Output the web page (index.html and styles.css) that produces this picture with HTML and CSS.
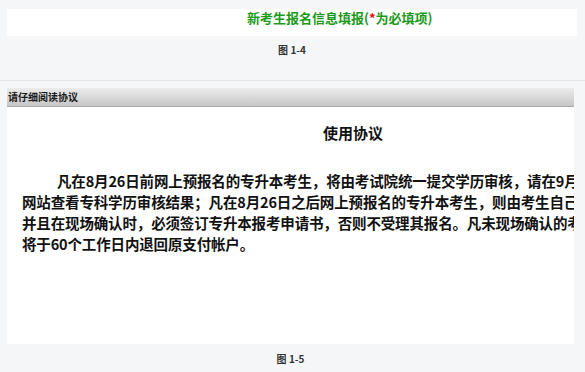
FILE: index.html
```html
<html>

<head>
    <meta http-equiv="Content-Type" content="text/html; charset=UTF-8">
    <title>报名说明</title>
    <link rel="stylesheet" href="styles.css">
</head>

<body>

    <!-- 图 1-4 -->
    <div class="fig">
        <div class="form-head">
            新考生报名信息填报(<span class="star">*</span>为必填项)
        </div>
        <p class="caption">图 1-4</p>
    </div>

    <!-- 图 1-5 -->
    <div class="fig fig2">
        <div class="panel">
            <div class="panel-title">请仔细阅读协议</div>
            <div class="panel-body">
                <div class="agree">
                    <h3 class="agree-title">使用协议</h3>
                    <p class="agree-text">凡在8月26日前网上预报名的专升本考生，将由考试院统一提交学历审核，请在9月1日后登录学信网查询，<br>网站查看专科学历审核结果；凡在8月26日之后网上预报名的专升本考生，则由考生自己登录学信网查询，<br>并且在现场确认时，必须签订专升本报考申请书，否则不受理其报名。凡未现场确认的考生，报名费<br>将于60个工作日内退回原支付帐户。</p>
                </div>
            </div>
        </div>
        <p class="caption">图 1-5</p>
    </div>

</body>

</html>
```

FILE: styles.css
```css
* {
    margin: 0;
    padding: 0;
}

body {
    background: #f5f6f8;
    font-family: "Noto Sans CJK SC", "Liberation Sans", sans-serif;
    color: #222;
}

/* 图 1-4 */
.fig {
    padding: 9px 8px 0 7px;
    height: 71px;
    border-bottom: 1px solid #e4e5e8;
}

.form-head {
    height: 27px;
    background: #fff;
    padding-left: 240px;
    box-sizing: border-box;
    font-size: 13px;
    font-weight: bold;
    line-height: 18px;
    color: #1b9a1b;
}

.star {
    color: #e01010;
}

.caption {
    margin-top: 7px;
    text-align: center;
    font-size: 10px;
    font-weight: bold;
    line-height: 14px;
    color: #333;
}

/* 图 1-5 */
.fig2 {
    height: auto;
    border-bottom: 0;
    padding: 7px 11px 0 7px;
}

.panel {
    background: #fff;
}

.panel-title {
    height: 18px;
    line-height: 18px;
    padding-left: 1px;
    font-size: 10px;
    font-weight: bold;
    color: #1a1a1a;
    background: linear-gradient(#ececec, #c6c6c6);
    border-bottom: 1px solid #a9a9a9;
}

.panel-body {
    height: 237px;
    overflow: hidden;
}

.agree {
    width: 662px;
    padding: 15px 0 0 15px;
}

.agree-title {
    text-align: center;
    font-size: 15px;
    line-height: 22px;
    color: #111;
}

.agree-text {
    margin-top: 26px;
    white-space: nowrap;
    text-indent: 35px;
    font-size: 14.5px;
    font-weight: bold;
    letter-spacing: -0.15px;
    line-height: 21px;
    color: #111;
}

.fig2 .caption {
    margin-top: 8px;
}
```
